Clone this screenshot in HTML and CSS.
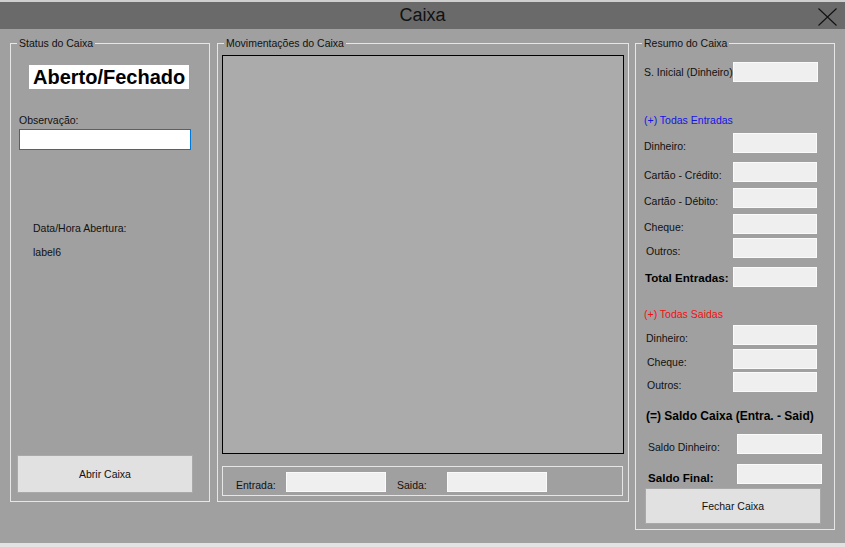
FILE: index.html
```html
<!DOCTYPE html>
<html lang="pt">
<head>
<meta charset="utf-8">
<title>Caixa</title>
<link rel="stylesheet" href="styles.css">
</head>
<body>
<header class="titlebar">
  <span class="title">Caixa</span>
  <svg class="close" width="19" height="18" viewBox="0 0 19 18"><path d="M0.5 0.5 L18.5 17.5 M18.5 0.5 L0.5 17.5" stroke="#111" stroke-width="1.1" fill="none"/></svg>
</header>
<main class="main">
  <fieldset class="group g-status">
    <legend>Status do Caixa</legend>
    <div class="status">Aberto/Fechado</div>
    <div class="lbl obs-lbl">Observação:</div>
    <input class="obs" type="text">
    <div class="lbl dh-lbl">Data/Hora Abertura:</div>
    <div class="lbl l6">label6</div>
    <button class="btn abrir">Abrir Caixa</button>
  </fieldset>

  <fieldset class="group g-mov">
    <legend>Movimentações do Caixa</legend>
    <div class="grid"></div>
    <div class="panel">
      <span class="plbl">Entrada:</span>
      <span class="tb tb-wide"></span>
      <span class="plbl saida">Saida:</span>
      <span class="tb tb-wide"></span>
    </div>
  </fieldset>

  <fieldset class="group g-res">
    <legend>Resumo do Caixa</legend>
    <div class="row mid mt13"><span class="rl">S. Inicial (Dinheiro):</span><span class="tb tb85"></span></div>
    <div class="head blue mt32">(+) Todas Entradas</div>
    <div class="row mt6"><span class="rl">Dinheiro:</span><span class="tb"></span></div>
    <div class="row mt9"><span class="rl">Cartão - Crédito:</span><span class="tb"></span></div>
    <div class="row mt6"><span class="rl">Cartão - Débito:</span><span class="tb"></span></div>
    <div class="row mt6"><span class="rl">Cheque:</span><span class="tb"></span></div>
    <div class="row mt4"><span class="rl in2">Outros:</span><span class="tb"></span></div>
    <div class="row mid mt9"><span class="rl bold in1">Total Entradas:</span><span class="tb"></span></div>
    <div class="head red mt21">(+) Todas Saidas</div>
    <div class="row mt4"><span class="rl in2">Dinheiro:</span><span class="tb"></span></div>
    <div class="row mt4"><span class="rl in3">Cheque:</span><span class="tb"></span></div>
    <div class="row mt3"><span class="rl in3">Outros:</span><span class="tb"></span></div>
    <div class="head bold saldo mt17">(=) Saldo Caixa (Entra. - Said)</div>
    <div class="row mt11"><span class="rl in4">Saldo Dinheiro:</span><span class="tb tb85"></span></div>
    <div class="row mt10"><span class="rl in4 bold">Saldo Final:</span><span class="tb tb85"></span></div>
    <button class="btn fechar">Fechar Caixa</button>
  </fieldset>
</main>
<footer class="bottom"></footer>
</body>
</html>
```

FILE: styles.css
```css
* { box-sizing: border-box; }
html, body { margin: 0; padding: 0; }
body {
  width: 845px;
  height: 547px;
  overflow: hidden;
  background: #a0a0a0;
  font-family: "Liberation Sans", Arial, sans-serif;
  font-size: 10.5px;
  color: #111;
  display: flex;
  flex-direction: column;
}
.titlebar {
  height: 29px;
  border-top: 2px solid #cfcfcf;
  background: #6a6a6a;
  display: flex;
  align-items: center;
  justify-content: center;
  position: relative;
}
.title { font-size: 18px; color: #111; line-height: 27px; }
.close { position: absolute; left: 818px; top: 6px; }

.main {
  flex: 1;
  display: flex;
  align-items: flex-start;
  padding: 8px 0 0 10px;
}
.group {
  margin: 0;
  padding: 0;
  border: 1px solid #e6e6e6;
  min-inline-size: 0;
  display: flex;
  flex-direction: column;
  align-items: flex-start;
}
.group legend {
  margin-left: 6px;
  padding: 0 2px;
  line-height: 12px;
  font-size: 10.5px;
}
.g-status { width: 200px; height: 465px; }
.g-mov { width: 412px; height: 465px; margin-left: 7px; }
.g-res { width: 200px; height: 493px; margin-left: 6px; }

.lbl { line-height: 13px; }
.status {
  margin: 16px 0 0 18px;
  background: #fff;
  font-weight: bold;
  font-size: 20px;
  line-height: 24px;
  height: 24px;
  padding: 0 4px 0 4px;
  color: #000;
}
.obs-lbl { margin: 25px 0 0 8px; }
.obs {
  margin: 2px 0 0 8px;
  width: 172px;
  height: 21px;
  border: 1px solid #0078d7;
  background: #fff;
  outline: none;
  padding: 0;
}
.dh-lbl { margin: 72px 0 0 22px; }
.l6 { margin: 11px 0 0 22px; }

.btn {
  width: 176px;
  background: #e1e1e1;
  border: 1px solid #a9a9a9;
  font-family: inherit;
  font-size: 10.5px;
  color: #111;
  padding: 0;
}
.abrir { height: 38px; margin: 196px 0 0 6px; }
.fechar { height: 36px; margin: 4px 0 0 9px; }

.grid {
  margin: 6px 0 0 4px;
  width: 402px;
  height: 399px;
  border: 1px solid #000;
  background: #ababab;
}
.panel {
  margin: 12px 0 0 4px;
  width: 401px;
  height: 30px;
  border: 1px solid #e6e6e6;
  display: flex;
  align-items: flex-end;
  padding: 0 0 3px 13px;
}
.plbl { width: 50px; line-height: 13px; }
.saida { margin-left: 11px; }

.tb {
  display: block;
  width: 84px;
  height: 20px;
  background: #efefef;
  border: 1px solid #fafafa;
  flex: none;
}
.tb85 { width: 85px; }
.tb-wide { width: 100px; }

.row {
  display: flex;
  align-items: flex-end;
  padding-left: 8px;
  height: 20px;
}
.row.mid { align-items: center; }
.rl { width: 89px; flex: none; line-height: 13px; white-space: nowrap; }
.head { padding-left: 8px; line-height: 13px; }
.blue { color: #1414e6; }
.red { color: #f01010; }
.bold { font-weight: bold; font-size: 11.6px; color: #000; }
.saldo { padding-left: 10px; line-height: 14px; font-size: 12px; }
.rl.in1 { padding-left: 1px; }
.rl.in2 { padding-left: 2px; }
.rl.in3 { padding-left: 3px; }
.rl.in4 { padding-left: 4px; width: 93px; }

.mt3 { margin-top: 3px; }
.mt4 { margin-top: 4px; }
.mt6 { margin-top: 6px; }
.mt9 { margin-top: 9px; }
.mt10 { margin-top: 10px; }
.mt11 { margin-top: 11px; }
.mt13 { margin-top: 13px; }
.mt17 { margin-top: 17px; }
.mt21 { margin-top: 21px; }
.mt32 { margin-top: 32px; }

.bottom { height: 4px; background: #e2e2e2; }
```
